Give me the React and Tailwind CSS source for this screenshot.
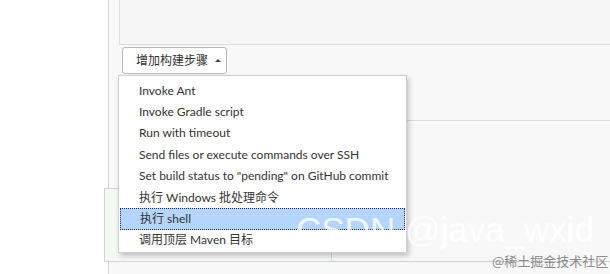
import React from 'react';

const steps = [
    'Invoke Ant',
    'Invoke Gradle script',
    'Run with timeout',
    'Send files or execute commands over SSH',
    'Set build status to "pending" on GitHub commit',
    '执行 Windows 批处理命令',
    '执行 shell',
    '调用顶层 Maven 目标',
];

const App = () => {
    const active = '执行 shell';

    return (
        <div
            className="relative w-[610px] h-[274px] overflow-hidden bg-white text-[#333]"
            style={{ fontFamily: 'Lato, "Noto Sans CJK SC", sans-serif' }}
        >
            <div className="flex h-full">
                {/* left white column */}
                <div className="w-[108px] bg-white" />

                {/* main column */}
                <div className="flex-1 flex flex-col bg-[#f8f8f8] border-l border-[#d4d4d4]">
                    <div className="ml-[10px] h-[45px] bg-[#f6f6f6] border-l border-b border-[#dedede]" />

                    <div className="ml-[13px] mt-[2px]">
                        <button className="flex items-center h-[27px] w-[105px] pl-[13px] bg-white border border-[#b9b9b9] rounded-[3px] text-[12px] text-[#333]">
                            增加构建步骤
                            <span className="ml-[7px] w-0 h-0 border-l-[3px] border-r-[3px] border-b-[3px] border-l-transparent border-r-transparent border-b-[#444]" />
                        </button>
                    </div>

                    <div className="ml-[10px] mt-[46px] border-b border-[#dcdcdc]" />

                    <div className="flex mt-[67px]">
                        <div className="-ml-[5px] w-[228px] h-[74px] bg-[#f5f8f5] border border-[#cfd8cf]" />
                        <div className="flex-1 h-[74px] border-b border-[#cfcfcf]" />
                    </div>
                </div>
            </div>

            {/* dropdown menu */}
            <ul className="absolute left-[118px] top-[75px] w-[289px] h-[178px] pt-[4px] bg-white border border-[#cfcfcf] shadow-[2px_3px_5px_rgba(0,0,0,0.22)] text-[12px] whitespace-nowrap">
                {steps.map((step) =>
                    step === active ? (
                        <li
                            key={step}
                            className="mx-[1px] h-[21.4px] flex items-center pl-[19px] bg-[#b5d5ff] border border-dotted border-[#1e2a5a]"
                        >
                            {step}
                        </li>
                    ) : (
                        <li key={step} className="h-[21.4px] flex items-center pl-[20px]">
                            {step}
                        </li>
                    )
                )}
            </ul>

            {/* watermarks */}
            <div
                className="absolute left-[296px] top-[212px] text-[35px] leading-none text-white/80 whitespace-nowrap pointer-events-none"
                style={{ fontFamily: '"Liberation Sans", sans-serif' }}
            >
                CSDN @java_wxid
            </div>
            <div
                className="absolute left-[492px] top-[254px] text-[13px] leading-none text-[#8a8a8a] whitespace-nowrap"
                style={{ fontFamily: '"Noto Sans CJK SC", serif' }}
            >
                @稀土掘金技术社区
            </div>
        </div>
    );
};

export default App;
